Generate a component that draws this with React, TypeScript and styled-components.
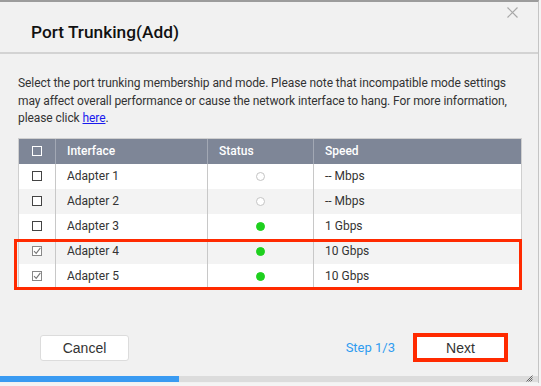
import styled, { createGlobalStyle } from "styled-components";

const GlobalStyle = createGlobalStyle`
  html, body {
    margin: 0;
    padding: 0;
    background: #ffffff;
  }
  * {
    box-sizing: border-box;
  }
`;

type Adapter = {
  name: string;
  up: boolean;
  speed: string;
  checked: boolean;
};

const adapters: Adapter[] = [
  { name: "Adapter 1", up: false, speed: "-- Mbps", checked: false },
  { name: "Adapter 2", up: false, speed: "-- Mbps", checked: false },
  { name: "Adapter 3", up: true, speed: "1 Gbps", checked: false },
  { name: "Adapter 4", up: true, speed: "10 Gbps", checked: true },
  { name: "Adapter 5", up: true, speed: "10 Gbps", checked: true },
];

function CheckBox({ checked }: { checked: boolean }) {
  return (
    <Box $checked={checked}>
      {checked && (
        <svg width="8" height="8" viewBox="0 0 8 8">
          <path d="M1 4.2 L3.2 6.4 L7.4 0.8" fill="none" stroke="#777" strokeWidth="1.1" />
        </svg>
      )}
    </Box>
  );
}

export default function App() {
  return (
    <>
      <GlobalStyle />
      <Page>
        <Dialog>
          <TitleBar>Port Trunking(Add)</TitleBar>
          <Close>
            <svg width="11" height="11" viewBox="0 0 11 11">
              <path d="M0.5 0.5 L10.5 10.5 M10.5 0.5 L0.5 10.5" stroke="#a8a8a8" strokeWidth="1.2" />
            </svg>
          </Close>
          <Content>
            <Intro>
              Select the port trunking membership and mode. Please note that incompatible mode settings
              <br />
              may affect overall performance or cause the network interface to hang. For more information,
              <br />
              please click <Link href="#">here</Link>.
            </Intro>
            <Table>
              <HeadRow>
                <HeadCell $center>
                  <CheckBox checked={false} />
                </HeadCell>
                <HeadCell>Interface</HeadCell>
                <HeadCell>Status</HeadCell>
                <HeadCell $last>Speed</HeadCell>
              </HeadRow>
              {adapters.map((a, i) => (
                <Row key={a.name} $alt={i % 2 === 1}>
                  <Cell $center>
                    <CheckBox checked={a.checked} />
                  </Cell>
                  <Cell>{a.name}</Cell>
                  <Cell $center>
                    <Dot $up={a.up} />
                  </Cell>
                  <Cell $last>{a.speed}</Cell>
                </Row>
              ))}
              <Highlight />
            </Table>
          </Content>
          <Footer>
            <CancelButton>Cancel</CancelButton>
            <FooterRight>
              <Step>Step 1/3</Step>
              <NextButton>Next</NextButton>
            </FooterRight>
          </Footer>
          <Progress>
            <ProgressFill style={{ width: `${(1 / 3) * 100}%` }} />
            <Grip>
              <svg width="7" height="7" viewBox="0 0 7 7">
                <path d="M6.5 0.5 L0.5 6.5 M6.5 2.5 L2.5 6.5 M6.5 4.5 L4.5 6.5" stroke="#666" strokeWidth="1" />
              </svg>
            </Grip>
          </Progress>
        </Dialog>
      </Page>
    </>
  );
}

const Page = styled.div`
  width: 541px;
  height: 386px;
  overflow: hidden;
  background: #f4f4f4;
`;

const Dialog = styled.div`
  position: relative;
  width: 539px;
  height: 383px;
  background: #f1f1f1;
  border-top: 2px solid #9c9c9c;
  border-right: 1px solid #c4c4c4;
  display: flex;
  flex-direction: column;
`;

const TitleBar = styled.div`
  height: 52px;
  padding: 20px 0 0 31px;
  font-family: Roboto, "Noto Sans", sans-serif;
  font-size: 17.3px;
  font-weight: 500;
  color: #111;
  border-bottom: 2px solid #d3d3d3;
`;

const Close = styled.div`
  position: absolute;
  top: 5px;
  right: 20px;
  line-height: 0;
`;

const Content = styled.div`
  padding: 21px 10px 0 18px;
`;

const Intro = styled.p`
  margin: 0;
  font-family: Roboto, "Noto Sans", sans-serif;
  font-size: 12px;
  letter-spacing: -0.08px;
  line-height: 17.5px;
  color: #333;
  white-space: nowrap;
`;

const Link = styled.a`
  color: #1a1aee;
  text-decoration: underline;
`;

const Table = styled.div`
  position: relative;
  width: 504px;
  margin-top: 10px;
  border: 1px solid #cfcfcf;
  border-bottom: none;
  background: #fff;
`;

const columns = "37px 152px 106px 1fr";

const HeadRow = styled.div`
  display: grid;
  grid-template-columns: ${columns};
  height: 25px;
  background: #7e8697;
`;

const HeadCell = styled.div<{ $center?: boolean; $last?: boolean }>`
  display: flex;
  align-items: center;
  justify-content: ${(p) => (p.$center ? "center" : "flex-start")};
  padding-left: ${(p) => (p.$center ? 0 : 11)}px;
  border-right: ${(p) => (p.$last ? "none" : "1px solid #a2a8b4")};
  font-family: Roboto, "Noto Sans", sans-serif;
  font-size: 12px;
  font-weight: 500;
  color: #fff;

  span {
    border-color: #fff;
    background: transparent;
  }
`;

const Row = styled.div<{ $alt: boolean }>`
  display: grid;
  grid-template-columns: ${columns};
  height: 25px;
  background: ${(p) => (p.$alt ? "#f3f3f3" : "#ffffff")};
`;

const Cell = styled.div<{ $center?: boolean; $last?: boolean }>`
  display: flex;
  align-items: center;
  justify-content: ${(p) => (p.$center ? "center" : "flex-start")};
  padding-left: ${(p) => (p.$center ? 0 : 11)}px;
  border-right: ${(p) => (p.$last ? "none" : "1px solid #c8c8c8")};
  font-family: Roboto, "Noto Sans", sans-serif;
  font-size: 12px;
  color: #333;
`;

const Box = styled.span<{ $checked: boolean }>`
  display: inline-flex;
  align-items: center;
  justify-content: center;
  width: 10px;
  height: 10px;
  border: 1px solid ${(p) => (p.$checked ? "#888" : "#444")};
  background: #fff;
`;

const Dot = styled.span<{ $up: boolean }>`
  width: 9px;
  height: 9px;
  border-radius: 50%;
  background: ${(p) => (p.$up ? "#1ed01e" : "#fff")};
  border: 1px solid ${(p) => (p.$up ? "#1ed01e" : "#c4c4c4")};
`;

const Highlight = styled.div`
  position: absolute;
  left: -5px;
  top: 100px;
  right: -1px;
  height: 51px;
  border: 3px solid #ff2a00;
  pointer-events: none;
`;

const Footer = styled.div`
  margin-top: auto;
  display: flex;
  align-items: center;
  justify-content: space-between;
  padding: 0 30px 14px 40px;
`;

const CancelButton = styled.button`
  width: 89px;
  height: 26px;
  background: #fff;
  border: 1px solid #dcdcdc;
  border-radius: 3px;
  font-family: "Liberation Sans", Arial, sans-serif;
  font-size: 14px;
  color: #333;
  padding: 0;
`;

const FooterRight = styled.div`
  display: flex;
  align-items: center;
  gap: 18px;
`;

const Step = styled.span`
  font-family: Roboto, "Noto Sans", sans-serif;
  font-size: 13px;
  color: #2f9cf0;
`;

const NextButton = styled.button`
  width: 95px;
  height: 29px;
  background: #fff;
  border: 4px solid #ff2a00;
  font-family: "Liberation Sans", Arial, sans-serif;
  font-size: 14px;
  color: #333;
  padding: 0;
`;

const Progress = styled.div`
  position: relative;
  height: 6px;
  margin-bottom: 1px;
  background: #dcdcdc;
`;

const ProgressFill = styled.div`
  height: 100%;
  background: #3a9bf2;
`;

const Grip = styled.div`
  position: absolute;
  right: 5px;
  bottom: 0;
  line-height: 0;
`;
